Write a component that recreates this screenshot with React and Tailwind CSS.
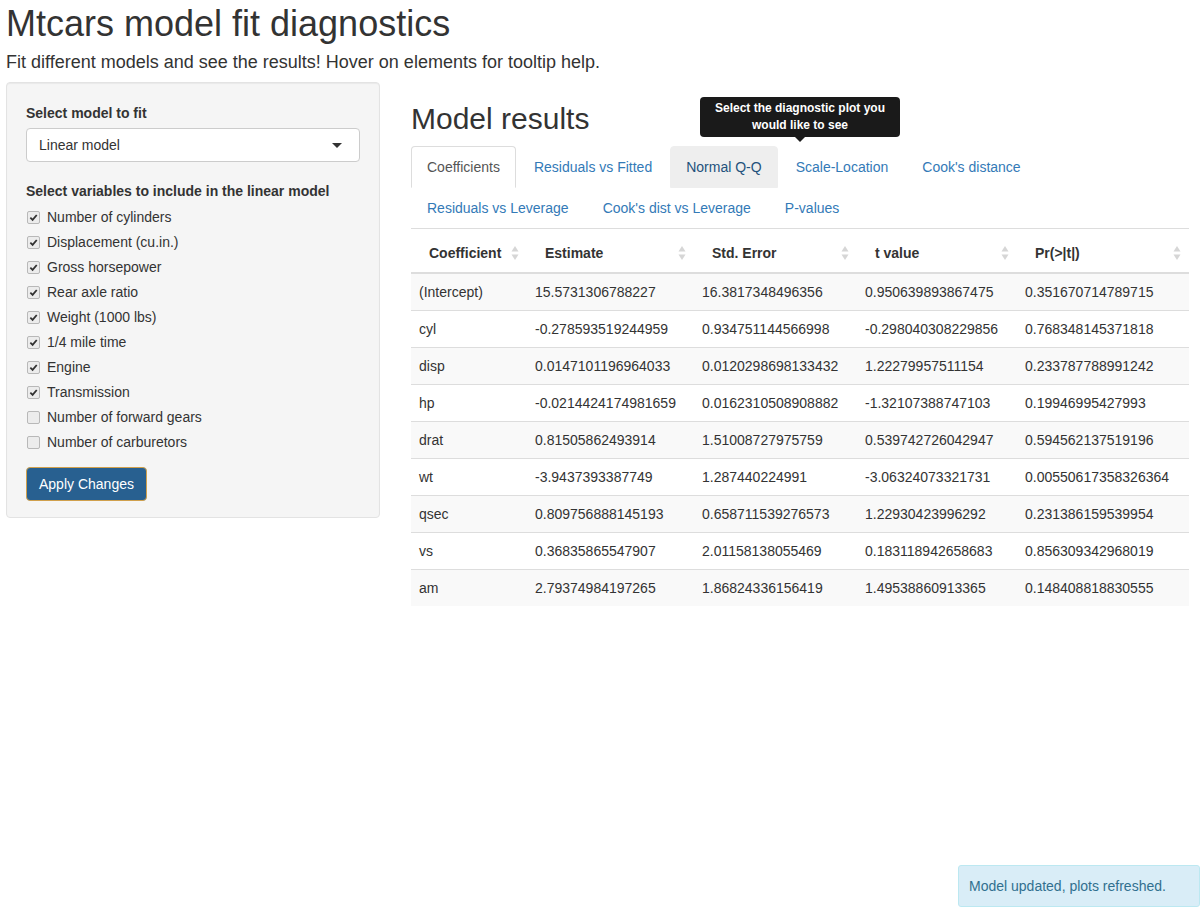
import React from "react";

const variables = [
  { label: "Number of cylinders", checked: true },
  { label: "Displacement (cu.in.)", checked: true },
  { label: "Gross horsepower", checked: true },
  { label: "Rear axle ratio", checked: true },
  { label: "Weight (1000 lbs)", checked: true },
  { label: "1/4 mile time", checked: true },
  { label: "Engine", checked: true },
  { label: "Transmission", checked: true },
  { label: "Number of forward gears", checked: false },
  { label: "Number of carburetors", checked: false },
];

const rows = [
  ["(Intercept)", "15.5731306788227", "16.3817348496356", "0.950639893867475", "0.351670714789715"],
  ["cyl", "-0.278593519244959", "0.934751144566998", "-0.298040308229856", "0.768348145371818"],
  ["disp", "0.0147101196964033", "0.0120298698133432", "1.22279957511154", "0.233787788991242"],
  ["hp", "-0.0214424174981659", "0.0162310508908882", "-1.32107388747103", "0.19946995427993"],
  ["drat", "0.81505862493914", "1.51008727975759", "0.539742726042947", "0.594562137519196"],
  ["wt", "-3.9437393387749", "1.287440224991", "-3.06324073321731", "0.00550617358326364"],
  ["qsec", "0.809756888145193", "0.658711539276573", "1.22930423996292", "0.231386159539954"],
  ["vs", "0.36835865547907", "2.01158138055469", "0.183118942658683", "0.856309342968019"],
  ["am", "2.79374984197265", "1.86824336156419", "1.49538860913365", "0.148408818830555"],
];

const headers = [
  { name: "Coefficient", w: "w-[116px]" },
  { name: "Estimate", w: "w-[167px]" },
  { name: "Std. Error", w: "w-[163px]" },
  { name: "t value", w: "w-[160px]" },
  { name: "Pr(>|t|)", w: "w-[172px]" },
];

const tabsRow = [
  { name: "Coefficients", state: "active" },
  { name: "Residuals vs Fitted" },
  { name: "Normal Q-Q", state: "hover" },
  { name: "Scale-Location" },
  { name: "Cook's distance" },
  { name: "Residuals vs Leverage" },
  { name: "Cook's dist vs Leverage" },
  { name: "P-values" },
];

function Checkbox({ checked }) {
  return (
    <span className="inline-flex h-[13px] w-[13px] items-center justify-center rounded-[2px] border border-[#b8b8b8] bg-[#ececec]">
      {checked && (
        <svg width="9" height="9" viewBox="0 0 10 10">
          <path d="M1.5 5.2 L4 7.6 L8.6 2.2" fill="none" stroke="#333" strokeWidth="2" />
        </svg>
      )}
    </span>
  );
}

function SortIcon() {
  return (
    <svg width="8" height="16" viewBox="0 0 8 16" className="shrink-0">
      <path d="M4 1 L7.5 6.5 L0.5 6.5 Z" fill="#d6d6d6" />
      <path d="M4 15 L7.5 9.5 L0.5 9.5 Z" fill="#d6d6d6" />
    </svg>
  );
}

export default function App() {
  return (
    <div className="relative min-h-[911px] px-[6px] font-['Liberation_Sans',Arial,sans-serif] text-[14px] leading-[20px] text-[#333]">
      <h1 className="mt-[4px] text-[36px] leading-[1.1]">Mtcars model fit diagnostics</h1>
      <h4 className="mt-[9px] text-[18px] leading-[1.1]">
        Fit different models and see the results! Hover on elements for tooltip help.
      </h4>

      <div className="mt-[10px] flex gap-[31px]">
        {/* sidebar */}
        <div className="h-[436px] w-[374px] shrink-0 rounded-[4px] border border-[#e3e3e3] bg-[#f5f5f5] px-[19px] pt-[20px] pb-[19px] shadow-[inset_0_1px_1px_rgba(0,0,0,0.05)]">
          <label className="mb-[5px] block font-bold">Select model to fit</label>
          <div className="flex h-[34px] items-center justify-between rounded-[4px] border border-[#ccc] bg-white pl-[12px] pr-[17px]">
            <span>Linear model</span>
            <svg width="10" height="5" viewBox="0 0 10 5">
              <path d="M0 0 L10 0 L5 5 Z" fill="#333" />
            </svg>
          </div>
          <label className="mt-[19px] mb-[6px] block font-bold">
            Select variables to include in the linear model
          </label>
          <div className="flex flex-col gap-[5px]">
            {variables.map((v) => (
              <div key={v.label} className="flex h-[20px] items-center gap-[7px] pl-[1px]">
                <Checkbox checked={v.checked} />
                <span>{v.label}</span>
              </div>
            ))}
          </div>
          <button className="mt-[15px] h-[34px] rounded-[4px] border border-[#d0a04c] bg-[#286090] px-[12px] text-white">
            Apply Changes
          </button>
        </div>

        {/* main panel */}
        <div className="relative w-[778px]">
          <h2 className="mt-[20px] text-[30px] leading-[1.1]">Model results</h2>

          <div className="absolute left-[289px] top-[15px] z-10 flex flex-col items-center">
            <div className="w-[200px] rounded-[4px] bg-[#1a1a1a] px-[8px] py-[3px] text-center text-[12px] font-bold leading-[17px] text-white">
              Select the diagnostic plot you would like to see
            </div>
            <div className="h-0 w-0 border-x-[5px] border-t-[5px] border-x-transparent border-t-[#1a1a1a]" />
          </div>

          <ul className="mt-[11px] flex flex-wrap border-b border-[#ddd]">
            {tabsRow.map((t) => (
              <li key={t.name} className="-mb-px mr-[2px]">
                <span
                  className={
                    t.state === "active"
                      ? "block rounded-t-[4px] border border-[#ddd] border-b-transparent bg-white px-[15px] py-[10px] text-[#555]"
                      : t.state === "hover"
                      ? "block rounded-t-[4px] border border-[#eee] bg-[#eee] px-[15px] py-[10px] text-[#23527c]"
                      : "block rounded-t-[4px] border border-transparent px-[15px] py-[10px] text-[#337ab7]"
                  }
                >
                  {t.name}
                </span>
              </li>
            ))}
          </ul>

          <table className="mt-[5px] w-full table-fixed border-collapse">
            <thead>
              <tr>
                {headers.map((h) => (
                  <th key={h.name} className={`${h.w} border-b-2 border-[#ddd] py-[9px] pl-[18px] pr-[8px] text-left font-bold`}>
                    <div className="flex items-center justify-between">
                      <span>{h.name}</span>
                      <SortIcon />
                    </div>
                  </th>
                ))}
              </tr>
            </thead>
            <tbody>
              {rows.map((r, i) => (
                <tr key={r[0]} className={i % 2 === 0 ? "bg-[#f9f9f9]" : "bg-white"}>
                  {r.map((c, j) => (
                    <td key={j} className={`${i > 0 ? "border-t border-[#ddd]" : ""} px-[8px] py-[8px] whitespace-nowrap`}>
                      {c}
                    </td>
                  ))}
                </tr>
              ))}
            </tbody>
          </table>
        </div>
      </div>

      <div className="fixed bottom-[4px] right-[4px] w-[242px] rounded-[3px] border border-[#bce8f1] bg-[#d9edf7] py-[10px] pl-[10px] pr-[8px] text-[#31708f]">
        Model updated, plots refreshed.
      </div>
    </div>
  );
}
